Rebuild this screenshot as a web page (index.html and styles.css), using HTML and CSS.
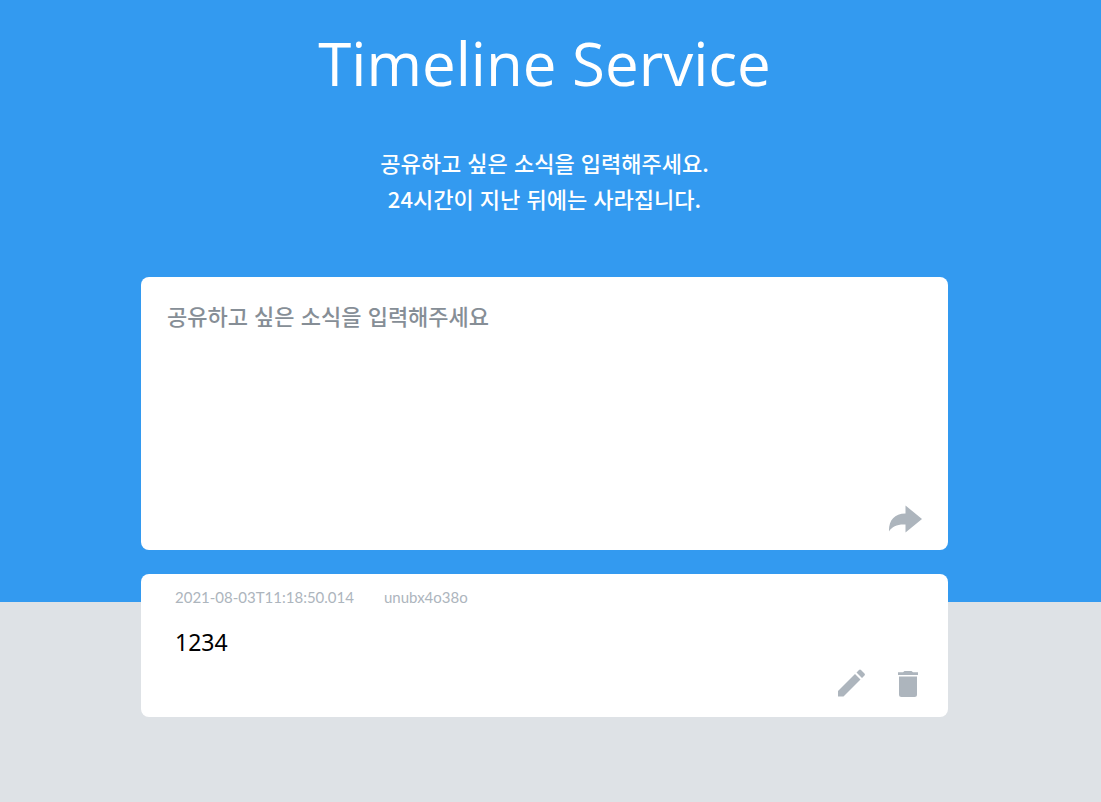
FILE: index.html
```html
<!DOCTYPE html>
<html lang="ko">
<head>
<meta charset="utf-8">
<meta name="viewport" content="width=device-width, initial-scale=1">
<title>Timeline Service</title>
<link rel="stylesheet" href="styles.css">
</head>
<body>
<header class="hero">
  <h1 class="title">Timeline Service</h1>
  <p class="intro">공유하고 싶은 소식을 입력해주세요.<br>24시간이 지난 뒤에는 사라집니다.</p>
  <form class="card composer">
    <textarea class="composer-text" aria-label="소식" placeholder="공유하고 싶은 소식을 입력해주세요"></textarea>
    <button class="icon-button" type="button" aria-label="보내기">
      <svg width="34" height="28" viewBox="0 0 34 28"><path d="M17.500 0.500L34 14L17.500 27.500V19.500C10 19 4 21 1 26.500C0.500 16 6 8.500 17.500 8.500Z"/></svg>
    </button>
  </form>
</header>
<main class="timeline">
  <article class="card post">
    <div class="meta"><time datetime="2021-08-03T11:18:50.014">2021-08-03T11:18:50.014</time><span>unubx4o38o</span></div>
    <p class="contents">1234</p>
    <div class="actions">
      <button class="icon-button" type="button" aria-label="수정">
        <svg width="28" height="28" viewBox="0 0 28 28"><path d="M0 27.500V22L17 5L22.500 10.500L5.500 27.500ZM18.500 3.500L21 1Q22 0 23 1L26.500 4.500Q27.500 5.500 26.500 6.500L24 9Z"/></svg>
      </button>
      <button class="icon-button" type="button" aria-label="삭제">
        <svg width="20" height="28" viewBox="0 0 20 28"><path d="M0 3.300H5L6.500 2H13.500L15 3.300H20V6H0ZM1 7.500H19V25.500Q19 28 16.500 28H3.500Q1 28 1 25.500Z"/></svg>
      </button>
    </div>
  </article>
</main>
</body>
</html>
```
FILE: styles.css
```css
* {
  box-sizing: border-box;
}

body {
  margin: 0;
  min-height: 100vh;
  background: #dee2e6;
  font-family: "Noto Sans", "Noto Sans CJK KR", sans-serif;
}

.hero,
.timeline {
  display: flex;
  flex-direction: column;
  align-items: center;
  padding: 0 24px 0 12px;
}

.hero {
  padding-top: 20px;
  padding-bottom: 52px;
  background: #339af0;
  color: #fff;
  text-align: center;
}

.title {
  margin: 0 0 38px;
  font-family: "Open Sans", sans-serif;
  font-size: 60px;
  font-weight: 400;
  line-height: 86px;
}

.intro {
  margin: 0 0 61px;
  font-family: "Noto Sans CJK KR", sans-serif;
  font-size: 22px;
  font-weight: 500;
  line-height: 36px;
}

.card {
  width: 100%;
  max-width: 807px;
  border-radius: 8px;
  background: #fff;
}

.composer {
  display: flex;
  flex-direction: column;
  align-items: flex-end;
  padding: 20px 26px 17px;
}

.composer-text {
  width: 100%;
  height: 208px;
  padding: 0;
  border: 0;
  outline: 0;
  resize: none;
  background: none;
  font-family: "Noto Sans CJK KR", sans-serif;
  font-size: 22px;
  font-weight: 500;
  line-height: 36px;
}

.composer-text::placeholder {
  color: #868e96;
}

.icon-button {
  display: flex;
  padding: 0;
  border: 0;
  background: none;
  color: #adb5bd;
  cursor: pointer;
}

.icon-button svg {
  fill: currentColor;
}

.timeline {
  margin-top: -28px;
}

.post {
  padding: 12px 30px 20px 34px;
}

.meta {
  display: flex;
  gap: 30px;
  color: #adb5bd;
  font-family: Lato, sans-serif;
  font-size: 15px;
  line-height: 22px;
}

.contents {
  margin: 16px 0 9px;
  color: #000;
  font-size: 23px;
  line-height: 36px;
}

.actions {
  display: flex;
  justify-content: flex-end;
  gap: 32px;
}
```
